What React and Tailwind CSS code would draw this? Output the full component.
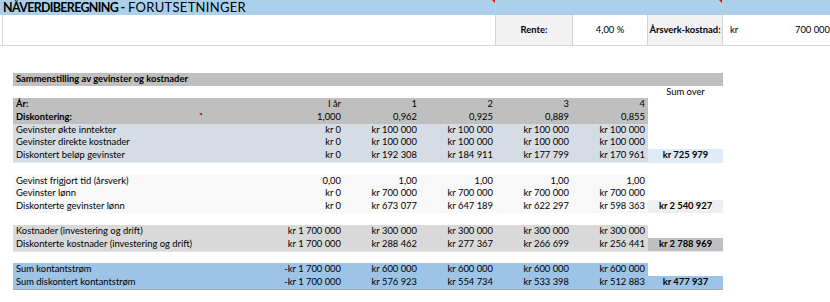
import React from "react";

const years = ["I år", "1", "2", "3", "4"];

const groups = [
  {
    bg: "bg-[#d6dce4]",
    sumBg: "bg-[#ddebf7]",
    line: "shadow-[0_1px_0_#e4e9f0]",
    rows: [
      { label: "Gevinster økte inntekter", values: ["kr 0", "kr 100 000", "kr 100 000", "kr 100 000", "kr 100 000"] },
      { label: "Gevinster direkte kostnader", values: ["kr 0", "kr 100 000", "kr 100 000", "kr 100 000", "kr 100 000"] },
      { label: "Diskontert beløp gevinster", values: ["kr 0", "kr 192 308", "kr 184 911", "kr 177 799", "kr 170 961"], sum: "kr 725 979" },
    ],
  },
  {
    bg: "bg-[#f8f8f8]",
    sumBg: "bg-[#efefef]",
    line: "",
    rows: [
      { label: "Gevinst frigjort tid (årsverk)", values: ["0,00", "1,00", "1,00", "1,00", "1,00"] },
      { label: "Gevinster lønn", values: ["kr 0", "kr 700 000", "kr 700 000", "kr 700 000", "kr 700 000"] },
      { label: "Diskonterte gevinster lønn", values: ["kr 0", "kr 673 077", "kr 647 189", "kr 622 297", "kr 598 363"], sum: "kr 2 540 927" },
    ],
  },
  {
    bg: "bg-[#d9d9d9]",
    sumBg: "bg-[#bfbfbf]",
    line: "shadow-[0_1px_0_#e6e6e6]",
    rows: [
      { label: "Kostnader (investering og drift)", values: ["kr 1 700 000", "kr 300 000", "kr 300 000", "kr 300 000", "kr 300 000"] },
      { label: "Diskonterte kostnader (investering og drift)", values: ["kr 1 700 000", "kr 288 462", "kr 277 367", "kr 266 699", "kr 256 441"], sum: "kr 2 788 969" },
    ],
  },
  {
    bg: "bg-[#9dc3e6]",
    sumBg: "bg-[#9dc3e6]",
    line: "shadow-[0_1px_0_#a9a9a9]",
    rows: [
      { label: "Sum kontantstrøm", values: ["-kr 1 700 000", "kr 600 000", "kr 600 000", "kr 600 000", "kr 600 000"] },
      { label: "Sum diskontert kontantstrøm", values: ["-kr 1 700 000", "kr 576 923", "kr 554 734", "kr 533 398", "kr 512 883"], sum: "kr 477 937" },
    ],
  },
];

const Row = ({ label, values, bg, sum, sumBg, bold, line }) => (
  <div className="flex h-[12.7px] leading-[12.7px]">
    <div className={`flex ${bg} ${line || ""}`}>
      <div className={`w-[255px] pl-[3px] ${bold ? "font-bold" : ""}`}>{label}</div>
      {values.map((v, i) => (
        <div key={i} className="w-[76px] pr-[3px] text-right">
          {v}
        </div>
      ))}
    </div>
    <div className={`w-[75px] text-center font-bold ${sum ? `${sumBg} ${line || ""}` : ""}`}>{sum}</div>
  </div>
);

const Blank = ({ children }) => (
  <div className="flex h-[12.7px] leading-[12.7px]">
    <div className="w-[635px]" />
    <div className="w-[75px] text-center">{children}</div>
  </div>
);

const Marker = ({ className }) => (
  <div className={`absolute w-0 h-0 border-t-[3px] border-t-[#e01010] border-l-[3px] border-l-transparent ${className}`} />
);

export default function App() {
  return (
    <div className="w-[830px] h-[302px] overflow-hidden bg-white text-black font-[Lato,sans-serif]">
      {/* Header band */}
      <div className="flex h-[15px] bg-[#acd0ea]">
        <div className="w-[495px] pl-[3px] text-[13px] leading-[15px] whitespace-pre">
          <span className="font-bold text-[12.5px] tracking-[-0.7px]">NÅVERDIBEREGNING -</span>
          <span className="tracking-[0.3px]"> FORUTSETNINGER</span>
        </div>
        <div className="relative w-[227px] border-l border-[#c4ccd4]">
          <Marker className="left-[-4px] top-0" />
        </div>
        <div className="relative flex-1 border-l border-[#c4ccd4]">
          <Marker className="left-[-4px] top-0" />
        </div>
      </div>

      {/* Inputs row */}
      <div className="flex h-[31px] border-b border-[#d4d4d4] text-[9.4px]">
        <div className="ml-[2px] w-[493px] border-l border-[#d4d4d4]" />
        <div className="w-[77px] border-l border-[#d4d4d4] bg-[#f2f2f2] flex items-center justify-center font-bold">
          Rente:
        </div>
        <div className="w-[75px] border-l border-[#d4d4d4] flex items-center justify-center">4,00 %</div>
        <div className="w-[75px] border-l border-[#d4d4d4] bg-[#f2f2f2] flex items-center justify-center font-bold whitespace-nowrap">
          Årsverk-kostnad:
        </div>
        <div className="flex-1 border-l border-[#d4d4d4] flex items-center justify-between pl-[7px]">
          <span>kr</span>
          <span>700 000</span>
        </div>
      </div>

      {/* Summary table */}
      <div className="ml-[13px] mt-[27px] w-[710px] text-[9.4px] whitespace-nowrap">
        <div className="h-[12.7px] leading-[12.7px] bg-[#bfbfbf] pl-[3px] font-bold">
          Sammenstilling av gevinster og kostnader
        </div>
        <Blank>Sum over</Blank>
        <div className="relative">
          <Row label="År:" values={years} bg="bg-[#bfbfbf]" bold />
          <Row label="Diskontering:" values={["1,000", "0,962", "0,925", "0,889", "0,855"]} bg="bg-[#bfbfbf]" bold />
          <Marker className="left-[186px] top-[15px]" />
        </div>
        {groups.map((g, gi) => (
          <React.Fragment key={gi}>
            {gi > 0 && <Blank />}
            {g.rows.map((r, ri) => (
              <Row
                key={ri}
                {...r}
                bg={g.bg}
                sumBg={g.sumBg}
                line={ri === g.rows.length - 1 ? g.line : ""}
              />
            ))}
          </React.Fragment>
        ))}
      </div>
    </div>
  );
}
